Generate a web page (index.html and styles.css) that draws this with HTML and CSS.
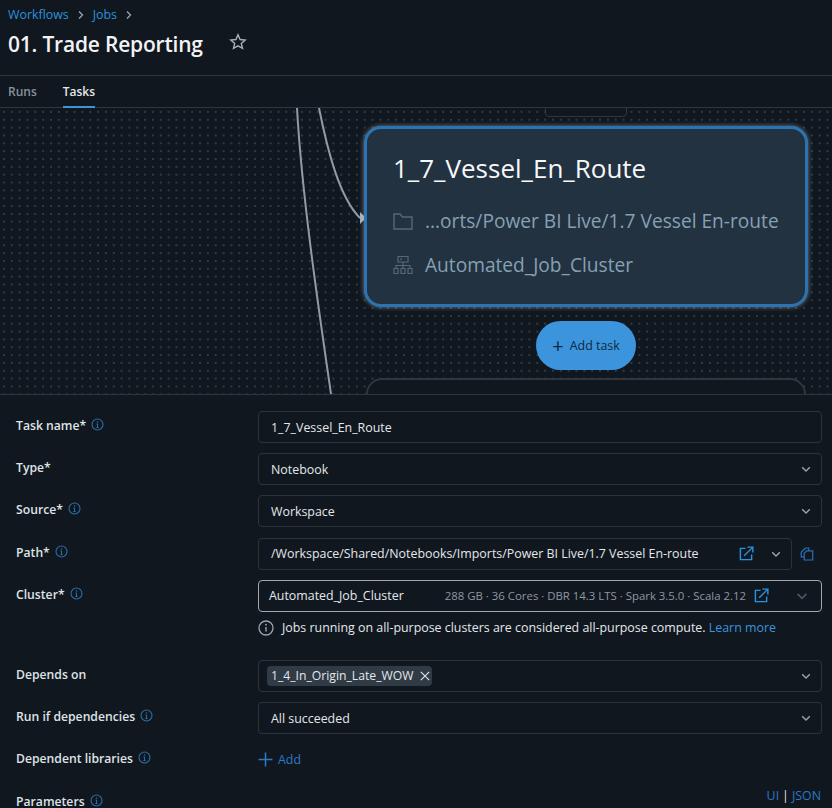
FILE: index.html
```html
<!DOCTYPE html>
<html>
<head>
  <title>01. Trade Reporting</title>
  <link rel="stylesheet" href="styles.css">
</head>
<body>
  <svg class="defs" width="0" height="0">
    <symbol id="info" viewBox="0 0 14 14">
      <circle cx="7" cy="7" r="5.9" fill="none" stroke="currentColor" stroke-width="1.2"/>
      <path d="M7 6.2v4M5.9 6.400H7M5.800 10.200h2.400" fill="none" stroke="currentColor" stroke-width="1.1"/>
      <circle cx="7" cy="4.200" r=".8" fill="currentColor"/>
    </symbol>
    <symbol id="chevron" viewBox="0 0 12 12">
      <path d="M2.200 4.200 6 8l3.800-3.800" fill="none" stroke="currentColor" stroke-width="1.400"/>
    </symbol>
    <symbol id="crumb-chevron" viewBox="0 0 10 10">
      <path d="M3 1.500 6.500 5 3 8.500" fill="none" stroke="currentColor" stroke-width="1.300"/>
    </symbol>
    <symbol id="external" viewBox="0 0 16 16">
      <path d="M7 2.500H1.500v12h12V9" fill="none" stroke="currentColor" stroke-width="1.500"/>
      <path d="M5.500 10.500 14 2M9 1.200h5.800V7" fill="none" stroke="currentColor" stroke-width="1.500"/>
    </symbol>
  </svg>

  <header class="page-head">
    <nav class="crumbs">
      <a>Workflows</a><svg class="sep"><use href="#crumb-chevron"/></svg><a>Jobs</a><svg class="sep"><use href="#crumb-chevron"/></svg>
    </nav>
    <div class="title-row">
      <h1>01. Trade Reporting</h1>
      <svg class="star" width="18" height="18" viewBox="0 0 18 18"><path d="M9 1.800l2.100 4.700 5.100.5-3.900 3.400 1.200 5-4.500-2.600-4.500 2.600 1.200-5L1.800 7l5.100-.5z" fill="none" stroke="currentColor" stroke-width="1.400"/></svg>
    </div>
  </header>

  <div class="tabs">
    <a class="tab">Runs</a>
    <a class="tab active">Tasks</a>
  </div>

  <section class="canvas">
    <svg class="edges" width="832" height="286" viewBox="0 0 832 286">
      <path d="M297 0C302 90 320 210 331 286" fill="none" stroke="#8f9ca6" stroke-width="2"/>
      <path d="M319 0C328 45 340 90 360 110" fill="none" stroke="#8f9ca6" stroke-width="2"/>
      <path d="M360 104l6 6-6 6z" fill="#a5afb7"/>
    </svg>
    <div class="node-stub top"></div>
    <div class="node">
      <div class="node-title">1_7_Vessel_En_Route</div>
      <div class="node-line">
        <svg width="20" height="17" viewBox="0 0 20 17"><path d="M1 1h6l2.500 3H19v12H1z" fill="none" stroke="currentColor" stroke-width="1.400"/></svg>
        <span>...orts/Power BI Live/1.7 Vessel En-route</span>
      </div>
      <div class="node-line">
        <svg width="20" height="20" viewBox="0 0 20 20"><path d="M5 1.500h10v5.500H5zM7 4.200h2M10 7v3.500M3 13.500v-3h14v3M10 10.500v3M1 13.500h4v5H1zM8 13.500h4v5H8zM15 13.500h4v5h-4z" fill="none" stroke="currentColor" stroke-width="1.200"/></svg>
        <span>Automated_Job_Cluster</span>
      </div>
    </div>
    <button class="add-task"><span class="plus">+</span>Add task</button>
    <div class="node-stub bottom"></div>
  </section>

  <main class="form">
    <label class="field-label">Task name*<svg class="info"><use href="#info"/></svg></label>
    <div class="control">1_7_Vessel_En_Route</div>

    <label class="field-label">Type*</label>
    <div class="control">Notebook<svg class="chev"><use href="#chevron"/></svg></div>

    <label class="field-label">Source*<svg class="info"><use href="#info"/></svg></label>
    <div class="control">Workspace<svg class="chev"><use href="#chevron"/></svg></div>

    <label class="field-label">Path*<svg class="info"><use href="#info"/></svg></label>
    <div class="path-row">
      <div class="control">
        <span>/Workspace/Shared/Notebooks/Imports/Power BI Live/1.7 Vessel En-route</span>
        <svg class="ext"><use href="#external"/></svg>
        <svg class="chev"><use href="#chevron"/></svg>
      </div>
      <svg class="copy" width="14" height="14" viewBox="0 0 14 14"><path d="M5.500 1 1.200 5.200v4.600h3M5.500 1h3.300v2.800M6.800 3.800h5.900v9.200H4.200V6.300z" fill="none" stroke="currentColor" stroke-width="1.200"/></svg>
    </div>

    <label class="field-label">Cluster*<svg class="info"><use href="#info"/></svg></label>
    <div class="cluster-cell">
      <div class="control focused">
        <span class="cluster-name">Automated_Job_Cluster</span>
        <span class="cluster-meta">288 GB · 36 Cores · DBR 14.3 LTS · Spark 3.5.0 · Scala 2.12</span>
        <svg class="ext"><use href="#external"/></svg>
        <svg class="chev dim"><use href="#chevron"/></svg>
      </div>
      <p class="hint">
        <svg width="16" height="16" viewBox="0 0 16 16"><circle cx="8" cy="8" r="7" fill="none" stroke="currentColor" stroke-width="1.300"/><path d="M8 7v4.500" stroke="currentColor" stroke-width="1.400"/><circle cx="8" cy="4.700" r=".9" fill="currentColor"/></svg>
        <span>Jobs running on all-purpose clusters are considered all-purpose compute. <a>Learn more</a></span>
      </p>
    </div>

    <label class="field-label">Depends on</label>
    <div class="control tags">
      <span class="tag">1_4_In_Origin_Late_WOW<svg width="10" height="10" viewBox="0 0 10 10"><path d="M.8.800l8.400 8.400M9.200.800.800 9.200" stroke="currentColor" stroke-width="1.100"/></svg></span>
      <svg class="chev"><use href="#chevron"/></svg>
    </div>

    <label class="field-label">Run if dependencies<svg class="info"><use href="#info"/></svg></label>
    <div class="control">All succeeded<svg class="chev"><use href="#chevron"/></svg></div>

    <label class="field-label">Dependent libraries<svg class="info"><use href="#info"/></svg></label>
    <div class="add-row">
      <svg width="15" height="15" viewBox="0 0 15 15"><path d="M7.500.500v14M.500 7.500h14" stroke="currentColor" stroke-width="1.500"/></svg>Add
    </div>

    <label class="field-label">Parameters<svg class="info"><use href="#info"/></svg></label>
    <div class="mode-row"><a>UI</a> | <a>JSON</a></div>
  </main>
</body>
</html>
```

FILE: styles.css
```css
html, body {
  height: 100%;
}
body {
  font-family: "Open Sans", "Noto Sans", sans-serif;
  margin: 0;
  background-color: #11171f;
  color: #e4e8eb;
  overflow: hidden;
  font-size: 12.4px;
}
.defs {
  display: none;
}
a {
  color: #3b94d9;
}

.page-head {
  height: 76px;
  padding: 7px 8px 0;
  box-sizing: border-box;
  border-bottom: 1px solid #2f363d;
}
.crumbs {
  display: flex;
  align-items: center;
  gap: 7px;
  font-size: 12.4px;
  line-height: 16px;
  height: 16px;
}
.crumbs a {
  color: #2a93de;
}
.sep {
  width: 10px;
  height: 10px;
  color: #9aa5ad;
}
.title-row {
  display: flex;
  align-items: flex-start;
  margin-top: 5px;
}
h1 {
  margin: 0;
  font-size: 21px;
  letter-spacing: -0.2px;
  line-height: 32px;
  font-weight: 600;
  color: #f1f3f5;
}
.star {
  color: #a7b0b7;
  margin: 5px 0 0 26px;
}

.tabs {
  height: 32px;
  display: flex;
  gap: 26px;
  padding-left: 8px;
  box-sizing: border-box;
  border-bottom: 1px solid #2f363d;
}
.tab {
  height: 32px;
  line-height: 32px;
  font-size: 12px;
  font-weight: 600;
  color: #87929b;
  box-sizing: border-box;
}
.tab.active {
  color: #e4e8eb;
  border-bottom: 2px solid #3b94d9;
}

.canvas {
  position: relative;
  height: 286px;
  overflow: hidden;
  border-bottom: 1px solid #2f363d;
  background-color: #11171f;
  background-image: radial-gradient(circle, #2f3a44 0.7px, transparent 1.4px);
  background-size: 7.85px 7.85px;
}
.edges {
  position: absolute;
  left: 0;
  top: 0;
}
.node-stub {
  position: absolute;
  background: #11171f;
  border: 1px solid #2f363d;
  box-sizing: border-box;
}
.node-stub.top {
  left: 545px;
  top: -10px;
  width: 82px;
  height: 19px;
  border-radius: 4px;
}
.node-stub.bottom {
  left: 366px;
  top: 270px;
  width: 440px;
  height: 40px;
  border-width: 2px;
  border-radius: 16px;
}
.node {
  position: absolute;
  left: 364px;
  top: 18px;
  width: 444px;
  height: 181px;
  box-sizing: border-box;
  padding: 21px 0 0 26px;
  background: #233240;
  border: 3px solid #2a74b4;
  border-radius: 17px;
  box-shadow: 0 0 5px rgba(190, 205, 220, 0.55);
}
.node-title {
  font-size: 26px;
  line-height: 36px;
  color: #f6f8f9;
}
.node-line {
  display: flex;
  align-items: center;
  gap: 12px;
  height: 44px;
  font-size: 19.15px;
  color: #86a0b4;
}
.node-line svg {
  color: #566878;
  flex: none;
}
.node-line:nth-child(2) {
  margin-top: 13px;
}
.add-task {
  position: absolute;
  left: 536px;
  top: 213px;
  width: 100px;
  height: 49px;
  border: 0;
  border-radius: 25px;
  background: #3b94dc;
  color: #0f2a40;
  font-family: inherit;
  font-size: 12.4px;
  display: flex;
  align-items: center;
  justify-content: center;
  gap: 6px;
}
.plus {
  font-size: 20px;
  line-height: 18px;
}

.form {
  display: grid;
  grid-template-columns: 242px 1fr;
  grid-auto-rows: minmax(32px, auto);
  row-gap: 10.2px;
  padding: 16px 10px 0 16px;
}
.field-label {
  display: flex;
  align-items: flex-start;
  gap: 5px;
  height: 32px;
  line-height: 29px;
  font-size: 12.2px;
  font-weight: 600;
  color: #dfe3e6;
}
.info {
  width: 13px;
  height: 13px;
  margin-top: 7px;
  color: #2a6ea6;
}
.control {
  position: relative;
  display: flex;
  align-items: center;
  flex: 1;
  height: 32px;
  box-sizing: border-box;
  padding: 0 12px;
  border: 1px solid #2c343b;
  border-radius: 4px;
  color: #e4e8eb;
}
.chev {
  width: 12px;
  height: 12px;
  margin-left: auto;
  color: #9aa5ad;
  flex: none;
  margin-right: -3px;
}
.chev.dim {
  color: #4d5862;
  margin-left: 26px;
  width: 14px;
  height: 14px;
  margin-right: 0;
}
.ext {
  width: 15px;
  height: 15px;
  color: #2a93de;
  flex: none;
}
.path-row {
  display: flex;
  align-items: center;
  gap: 8px;
}
.path-row .control .ext {
  margin-left: auto;
}
.path-row .control .chev {
  margin-left: 16px;
}
.copy {
  color: #2a6ebd;
  margin-right: 8px;
}
.cluster-cell {
  display: flex;
  flex-direction: column;
  height: 70px;
}
.control.focused {
  border-color: #a2aab0;
  padding-left: 10px;
  flex: none;
}
.cluster-meta {
  margin-left: auto;
  margin-right: 8px;
  font-size: 11.4px;
  color: #8d98a1;
  white-space: nowrap;
}
.hint {
  margin: 8px 0 0;
  display: flex;
  align-items: center;
  gap: 8px;
  font-size: 12.4px;
  line-height: 16px;
  white-space: nowrap;
}
.hint svg {
  color: #9aa5ad;
}
.tag {
  display: inline-flex;
  align-items: center;
  gap: 6px;
  height: 20px;
  margin-left: -4px;
  padding: 0 2px 0 4px;
  border-radius: 4px;
  background: #303b46;
  font-size: 12.2px;
}
.add-row {
  display: flex;
  align-items: center;
  gap: 5px;
  height: 32px;
  margin-top: -1px;
  color: #2e78c7;
}
.mode-row {
  display: flex;
  justify-content: flex-end;
  gap: 3px;
  height: 20px;
  margin-top: 0;
  margin-right: 1px;
  color: #e4e8eb;
}
.mode-row a {
  color: #2e78c7;
}
```
